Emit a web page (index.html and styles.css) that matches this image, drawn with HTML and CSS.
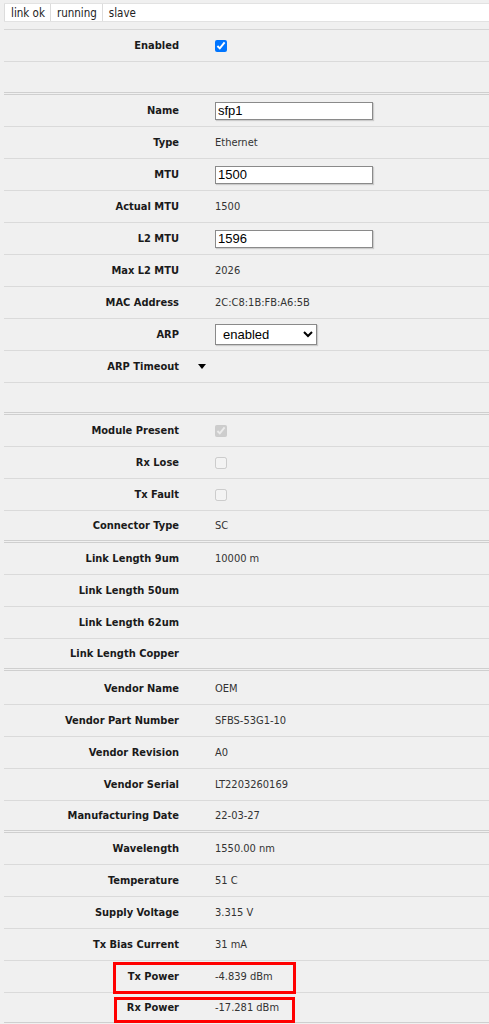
FILE: index.html
```html
<!DOCTYPE html>
<html lang="en">
<head>
    <meta charset="UTF-8">
    <meta name="viewport" content="width=device-width, initial-scale=1.0">
    <title>Interface &lt;sfp1&gt;</title>
    <link rel="stylesheet" href="styles.css">
</head>
<body>
    <div class="status">
        <span class="flag">link ok</span>
        <span class="flag">running</span>
        <span class="flag last">slave</span>
    </div>

    <form class="props">
        <div class="section">
            <div class="row">
                <label class="name">Enabled</label><span class="mark"></span>
                <div class="value"><input type="checkbox" checked></div>
            </div>
            <div class="row empty gap"></div>
        </div>

        <div class="section">
            <div class="row">
                <label class="name">Name</label><span class="mark"></span>
                <div class="value"><input type="text" class="field" value="sfp1"></div>
            </div>
            <div class="row">
                <label class="name">Type</label><span class="mark"></span>
                <div class="value">Ethernet</div>
            </div>
            <div class="row">
                <label class="name">MTU</label><span class="mark"></span>
                <div class="value"><input type="text" class="field" value="1500"></div>
            </div>
            <div class="row">
                <label class="name">Actual MTU</label><span class="mark"></span>
                <div class="value">1500</div>
            </div>
            <div class="row">
                <label class="name">L2 MTU</label><span class="mark"></span>
                <div class="value"><input type="text" class="field" value="1596"></div>
            </div>
            <div class="row">
                <label class="name">Max L2 MTU</label><span class="mark"></span>
                <div class="value">2026</div>
            </div>
            <div class="row">
                <label class="name">MAC Address</label><span class="mark"></span>
                <div class="value">2C:C8:1B:FB:A6:5B</div>
            </div>
            <div class="row">
                <label class="name">ARP</label><span class="mark"></span>
                <div class="value">
                    <select class="choice">
                        <option>enabled</option>
                        <option>disabled</option>
                        <option>proxy-arp</option>
                        <option>reply-only</option>
                    </select>
                </div>
            </div>
            <div class="row">
                <label class="name">ARP Timeout</label><span class="mark"><i class="toggle"></i></span>
                <div class="value"></div>
            </div>
            <div class="row empty"></div>
        </div>

        <div class="section">
            <div class="row">
                <label class="name">Module Present</label><span class="mark"></span>
                <div class="value"><input type="checkbox" checked disabled></div>
            </div>
            <div class="row">
                <label class="name">Rx Lose</label><span class="mark"></span>
                <div class="value"><input type="checkbox" disabled></div>
            </div>
            <div class="row">
                <label class="name">Tx Fault</label><span class="mark"></span>
                <div class="value"><input type="checkbox" disabled></div>
            </div>
            <div class="row">
                <label class="name">Connector Type</label><span class="mark"></span>
                <div class="value">SC</div>
            </div>
        </div>

        <div class="section links">
            <div class="row">
                <label class="name">Link Length 9um</label><span class="mark"></span>
                <div class="value">10000 m</div>
            </div>
            <div class="row">
                <label class="name">Link Length 50um</label><span class="mark"></span>
                <div class="value"></div>
            </div>
            <div class="row">
                <label class="name">Link Length 62um</label><span class="mark"></span>
                <div class="value"></div>
            </div>
            <div class="row">
                <label class="name">Link Length Copper</label><span class="mark"></span>
                <div class="value"></div>
            </div>
        </div>

        <div class="section">
            <div class="row">
                <label class="name">Vendor Name</label><span class="mark"></span>
                <div class="value">OEM</div>
            </div>
            <div class="row">
                <label class="name">Vendor Part Number</label><span class="mark"></span>
                <div class="value">SFBS-53G1-10</div>
            </div>
            <div class="row">
                <label class="name">Vendor Revision</label><span class="mark"></span>
                <div class="value">A0</div>
            </div>
            <div class="row">
                <label class="name">Vendor Serial</label><span class="mark"></span>
                <div class="value">LT2203260169</div>
            </div>
            <div class="row">
                <label class="name">Manufacturing Date</label><span class="mark"></span>
                <div class="value">22-03-27</div>
            </div>
        </div>

        <div class="section">
            <div class="row">
                <label class="name">Wavelength</label><span class="mark"></span>
                <div class="value">1550.00 nm</div>
            </div>
            <div class="row">
                <label class="name">Temperature</label><span class="mark"></span>
                <div class="value">51 C</div>
            </div>
            <div class="row">
                <label class="name">Supply Voltage</label><span class="mark"></span>
                <div class="value">3.315 V</div>
            </div>
            <div class="row">
                <label class="name">Tx Bias Current</label><span class="mark"></span>
                <div class="value">31 mA</div>
            </div>
            <div class="row boxed tx">
                <label class="name">Tx Power</label><span class="mark"></span>
                <div class="value">-4.839 dBm</div>
            </div>
            <div class="row boxed rx">
                <label class="name">Rx Power</label><span class="mark"></span>
                <div class="value">-17.281 dBm</div>
            </div>
        </div>
    </form>
</body>
</html>
```

FILE: styles.css
```css
body {
    margin: 0;
    padding: 3px 0 0 4px;
    background-color: #f0f0f0;
    font-family: "DejaVu Sans Condensed", "DejaVu Sans", Verdana, sans-serif;
    font-size: 11px;
    color: #333;
    overflow: hidden;
}

/* status flags on top */
.status {
    display: flex;
    height: 17px;
    background-color: #fff;
    border-top: 1px solid #e2e2e2;
    border-bottom: 1px solid #e2e2e2;
}
.flag {
    display: flex;
    align-items: center;
    padding: 0 5px 0 6px;
    border-left: 1px solid #dcdcdc;
    font-size: 11.5px;
    color: #222;
}
.flag.last { flex: 1; }

/* property rows */
.props {
    margin-top: 7px;
    border-top: 1px solid #d6d6d6;
}
.row {
    display: grid;
    grid-template-columns: 175px 36px 1fr;
    align-items: center;
    height: 32px;
    box-sizing: border-box;
    border-bottom: 1px solid #dadada;
}
.row.gap { height: 33px; }
.section .row:last-child {
    border-bottom: 3px double #cfcfcf;
}
.section.links { margin-bottom: 2px; }
.name {
    text-align: right;
    font-weight: bold;
    color: #1a1a1a;
}
.mark {
    display: flex;
    justify-content: flex-end;
    padding-right: 9px;
}
.toggle {
    width: 0;
    height: 0;
    border-left: 4px solid transparent;
    border-right: 4px solid transparent;
    border-top: 5px solid #000;
}
.value {
    display: flex;
    align-items: center;
}

input[type="checkbox"] {
    width: 12px;
    height: 12px;
    margin: 0;
}
.field {
    width: 158px;
    height: 18px;
    box-sizing: border-box;
    padding: 0 2px;
    border: 1px solid #8a8a8a;
    border-radius: 0;
    box-shadow: 1px 1px 1px rgba(0, 0, 0, 0.15);
    font-family: "Liberation Sans", Arial, sans-serif;
    font-size: 13px;
    color: #000;
    background: #fff;
}
.choice {
    width: 102px;
    height: 21px;
    padding: 0 3px;
    border: 1px solid #8a8a8a;
    border-radius: 0;
    box-shadow: 1px 1px 1px rgba(0, 0, 0, 0.15);
    font-family: "Liberation Sans", Arial, sans-serif;
    font-size: 13px;
    color: #000;
    background: #fff;
}

/* red highlight boxes */
.boxed { position: relative; }
.boxed::after {
    content: "";
    position: absolute;
    border: 3px solid #f00;
    box-sizing: border-box;
}
.tx::after { left: 109px; top: 1px; width: 183px; height: 32px; }
.rx::after { left: 110px; top: 4px; width: 181px; height: 26px; }
```
